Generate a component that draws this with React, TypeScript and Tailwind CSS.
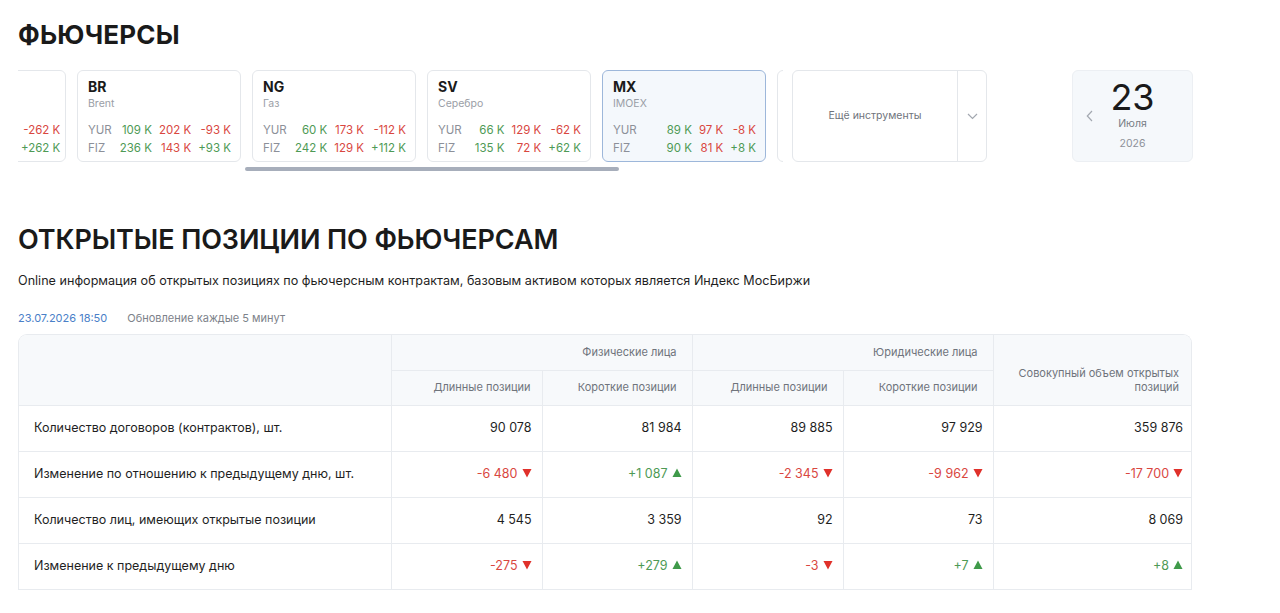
import React from "react";

type Card = { code: string; name: string; yur: [string, string, string]; fiz: [string, string, string]; active?: boolean };

const cards: Card[] = [
  { code: "Si", name: "Доллар", yur: ["95 K", "357 K", "-262 K"], fiz: ["357 K", "95 K", "+262 K"] },
  { code: "BR", name: "Brent", yur: ["109 K", "202 K", "-93 K"], fiz: ["236 K", "143 K", "+93 K"] },
  { code: "NG", name: "Газ", yur: ["60 K", "173 K", "-112 K"], fiz: ["242 K", "129 K", "+112 K"] },
  { code: "SV", name: "Серебро", yur: ["66 K", "129 K", "-62 K"], fiz: ["135 K", "72 K", "+62 K"] },
  { code: "MX", name: "IMOEX", yur: ["89 K", "97 K", "-8 K"], fiz: ["90 K", "81 K", "+8 K"], active: true },
  { code: "GD", name: "Золото", yur: ["120 K", "98 K", "+22 K"], fiz: ["88 K", "110 K", "-22 K"] },
];

const G = "text-[#4e9a55]";
const R = "text-[#d9473f]";

function colorOf(v: string, idx: number) {
  if (idx === 0) return G;
  if (idx === 1) return R;
  return v.startsWith("-") ? R : G;
}

function FutCard({ c }: { c: Card }) {
  return (
    <div
      className={`shrink-0 w-[164px] h-[92px] rounded-[6px] border pl-[10px] pr-[9px] pt-[7px] ${
        c.active ? "border-[#9db7da] bg-[#f4f8fc]" : "border-[#e4e7eb] bg-white"
      }`}
    >
      <div className="text-[14px] leading-[18px] font-bold text-[#1a1a1a]">{c.code}</div>
      <div className="text-[10.5px] leading-[14px] text-[#9a9ea6] mt-[1px]">{c.name}</div>
      <div className="mt-[10px] grid grid-cols-[1fr_auto_auto_auto] gap-x-[7px] text-[11.5px] leading-[18px] whitespace-nowrap">
        <span className="text-[#8c9099]">YUR</span>
        {c.yur.map((v, i) => (
          <span key={i} className={`text-right ${colorOf(v, i)}`}>{v}</span>
        ))}
        <span className="text-[#8c9099]">FIZ</span>
        {c.fiz.map((v, i) => (
          <span key={i} className={`text-right ${colorOf(v, i)}`}>{v}</span>
        ))}
      </div>
    </div>
  );
}

type Cell = { v: string; dir?: "up" | "down" };
const rows: { label: string; cells: Cell[] }[] = [
  { label: "Количество договоров (контрактов), шт.", cells: [{ v: "90 078" }, { v: "81 984" }, { v: "89 885" }, { v: "97 929" }, { v: "359 876" }] },
  {
    label: "Изменение по отношению к предыдущему дню, шт.",
    cells: [
      { v: "-6 480", dir: "down" },
      { v: "+1 087", dir: "up" },
      { v: "-2 345", dir: "down" },
      { v: "-9 962", dir: "down" },
      { v: "-17 700", dir: "down" },
    ],
  },
  { label: "Количество лиц, имеющих открытые позиции", cells: [{ v: "4 545" }, { v: "3 359" }, { v: "92" }, { v: "73" }, { v: "8 069" }] },
  {
    label: "Изменение к предыдущему дню",
    cells: [
      { v: "-275", dir: "down" },
      { v: "+279", dir: "up" },
      { v: "-3", dir: "down" },
      { v: "+7", dir: "up" },
      { v: "+8", dir: "up" },
    ],
  },
];

function Arrow({ dir }: { dir: "up" | "down" }) {
  return (
    <svg width="10" height="10" viewBox="0 0 10 10" className="inline-block ml-[4px] -mt-[2px]">
      {dir === "down" ? (
        <polygon points="0.5,1 9.5,1 5,9.5" fill="#e0312b" />
      ) : (
        <polygon points="0.5,9 9.5,9 5,0.5" fill="#3f9a4a" />
      )}
    </svg>
  );
}

export default function App() {
  const font = { fontFamily: "Inter, 'Noto Sans', sans-serif" };
  return (
    <div className="bg-white min-h-[613px] pl-[18px] text-[#1a1a1a]" style={font}>
      <h1 className="pt-[19px] text-[26px] leading-[32px] font-bold tracking-[0.2px]">ФЬЮЧЕРСЫ</h1>

      <div className="mt-[19px] flex items-start">
        <div className="w-[765px]">
          <div className="overflow-hidden">
            <div className="flex gap-[11px] ml-[-116px]">
              {cards.map((c) => (
                <FutCard key={c.code} c={c} />
              ))}
            </div>
          </div>
          <div className="ml-[227px] mt-[5px] w-[374px] h-[4px] rounded-full bg-[#a7aebb]" />
        </div>

        <div className="ml-[9px] w-[195px] h-[92px] rounded-[6px] border border-[#e4e7eb] flex">
          <div className="flex-1 flex items-center justify-center text-[10.5px] text-[#6f747c]">Ещё инструменты</div>
          <div className="w-[29px] border-l border-[#e4e7eb] flex items-center justify-center">
            <svg width="11" height="7" viewBox="0 0 11 7" fill="none">
              <path d="M1 1l4.5 4.5L10 1" stroke="#a3a8b0" strokeWidth="1.2" />
            </svg>
          </div>
        </div>

        <div className="ml-[85px] w-[121px] h-[92px] rounded-[6px] border border-[#eceff3] bg-[#f5f8fb] relative flex flex-col items-center">
          <div className="absolute left-[13px] top-[39px]">
            <svg width="7" height="12" viewBox="0 0 7 12" fill="none">
              <path d="M6 1L1.3 6 6 11" stroke="#a3a8b0" strokeWidth="1.2" />
            </svg>
          </div>
          <div className="mt-[6px] text-[36px] leading-[40px] font-normal text-[#1a1a1a]">23</div>
          <div className="mt-[0px] text-[10.5px] leading-[14px] text-[#777c84]">Июля</div>
          <div className="mt-[6px] text-[10.5px] leading-[14px] text-[#8d9199]">2026</div>
        </div>
      </div>

      <h2 className="mt-[52px] text-[27px] leading-[34px] font-semibold tracking-[-0.1px]">ОТКРЫТЫЕ ПОЗИЦИИ ПО ФЬЮЧЕРСАМ</h2>
      <p className="mt-[15px] text-[12.6px] leading-[18px] text-[#1f1f1f]">
        Online информация об открытых позициях по фьючерсным контрактам, базовым активом которых является Индекс МосБиржи
      </p>
      <div className="mt-[21px] flex items-center text-[11px] leading-[14px]">
        <span className="text-[#4a80c8]">23.07.2026 18:50</span>
        <span className="ml-[20px] text-[#7d828a]">Обновление каждые 5 минут</span>
      </div>

      <div className="mt-[9px] w-[1174px] rounded-t-[9px] border border-[#e8ebef] border-b-0 overflow-hidden">
        <table className="w-full border-collapse table-fixed">
          <colgroup>
            <col className="w-[372px]" />
            <col className="w-[151px]" />
            <col className="w-[150px]" />
            <col className="w-[151px]" />
            <col className="w-[150px]" />
            <col className="w-[200px]" />
          </colgroup>
          <thead className="bg-[#f7f9fb] text-[11px] text-[#6f747c]">
            <tr className="h-[35px]">
              <th rowSpan={2} className="border-r border-b border-[#e8ebef] font-normal" />
              <th colSpan={2} className="border-r border-b border-[#e8ebef] font-normal text-right pr-[15px]">Физические лица</th>
              <th colSpan={2} className="border-r border-b border-[#e8ebef] font-normal text-right pr-[15px]">Юридические лица</th>
              <th rowSpan={2} className="border-b border-[#e8ebef] font-normal text-right pr-[14px] leading-[14px] pt-[20px]">
                Совокупный объем открытых
                <br />
                позиций
              </th>
            </tr>
            <tr className="h-[35px]">
              <th className="border-r border-b border-[#e8ebef] font-normal text-right pr-[11px]">Длинные позиции</th>
              <th className="border-r border-b border-[#e8ebef] font-normal text-right pr-[15px]">Короткие позиции</th>
              <th className="border-r border-b border-[#e8ebef] font-normal text-right pr-[15px]">Длинные позиции</th>
              <th className="border-r border-b border-[#e8ebef] font-normal text-right pr-[15px]">Короткие позиции</th>
            </tr>
          </thead>
          <tbody className="text-[12.5px] text-[#1f1f1f]">
            {rows.map((r) => (
              <tr key={r.label} className="h-[46px]">
                <td className="border-r border-b border-[#e8ebef] pl-[15px]">{r.label}</td>
                {r.cells.map((c, i) => (
                  <td
                    key={i}
                    className={`border-b border-[#e8ebef] text-right ${i < 4 ? "border-r pr-[10px]" : "pr-[10px]"} ${
                      c.dir === "down" ? "text-[#d9473f]" : c.dir === "up" ? "text-[#4e9a55]" : ""
                    }`}
                  >
                    {c.v}
                    {c.dir && <Arrow dir={c.dir} />}
                  </td>
                ))}
              </tr>
            ))}
          </tbody>
        </table>
      </div>
    </div>
  );
}
